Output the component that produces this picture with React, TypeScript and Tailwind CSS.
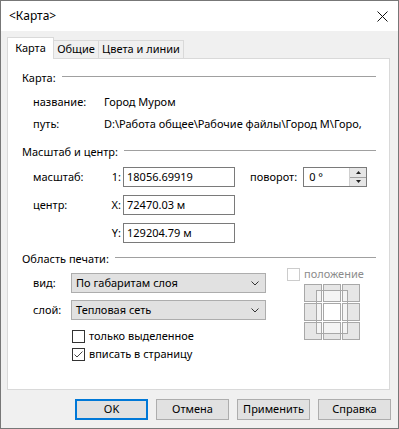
import React from 'react';

const font = { fontFamily: '"Noto Sans", "Liberation Sans", sans-serif' };

function SectionHeader({ title }: { title: string }) {
  return (
    <div className="flex items-center h-[16px]">
      <span className="whitespace-nowrap">{title}</span>
      <div className="flex-1 h-px bg-[#a0a0a0] ml-[6px] mb-[3px]" />
    </div>
  );
}

function TextBox({ value, width }: { value: string; width: string }) {
  return (
    <div className={`${width} h-[20px] border border-[#7a7a7a] bg-white flex items-center pl-[3px]`}>
      {value}
    </div>
  );
}

function Select({ value }: { value: string }) {
  return (
    <div className="w-[195px] h-[20px] border border-[#adadad] bg-[#e1e1e1] flex items-center pl-[4px] pr-[6px]">
      <span className="flex-1">{value}</span>
      <svg width="8" height="5" viewBox="0 0 8 5">
        <path d="M0.5 0.5 L4 4 L7.5 0.5" fill="none" stroke="#333" strokeWidth="1" />
      </svg>
    </div>
  );
}

function Checkbox({ label, checked, disabled }: { label: string; checked?: boolean; disabled?: boolean }) {
  return (
    <div className="flex items-center h-[14px]">
      <div
        className={`shrink-0 w-[13px] h-[13px] border bg-white flex items-center justify-center ${
          disabled ? 'border-[#cccccc]' : 'border-[#333333]'
        }`}
      >
        {checked && (
          <svg width="11" height="11" viewBox="0 0 11 11">
            <path d="M1.5 5.5 L4 8 L9.5 2.5" fill="none" stroke="#444" strokeWidth="1" />
          </svg>
        )}
      </div>
      <span className={`ml-[4px] whitespace-nowrap ${disabled ? 'text-[#8c8c8c]' : ''}`}>{label}</span>
    </div>
  );
}

function PositionGrid() {
  const cells = [0, 19, 38];
  return (
    <svg width="57" height="57" viewBox="0 0 57 57">
      {cells.map(y =>
        cells.map(x => (
          <rect key={`f-${x}-${y}`} x={x + 0.5} y={y + 0.5} width="17" height="17" fill="#e6e6e6" />
        ))
      )}
      <rect x="12.5" y="6.5" width="31" height="43" fill="#ffffff" fillOpacity="0.55" stroke="#a8a8a8" />
      {cells.map(y =>
        cells.map(x => (
          <rect
            key={`s-${x}-${y}`}
            x={x + 0.5}
            y={y + 0.5}
            width="17"
            height="17"
            fill={x === 19 && y === 19 ? '#ffffff' : 'none'}
            stroke="#a8a8a8"
          />
        ))
      )}
    </svg>
  );
}

function Button({ label, primary }: { label: string; primary?: boolean }) {
  return (
    <div
      className={`w-[73px] h-[21px] bg-[#e1e1e1] flex items-center justify-center ${
        primary ? 'border-2 border-[#0078d7]' : 'border border-[#adadad]'
      }`}
    >
      {label}
    </div>
  );
}

export default function App() {
  return (
    <div
      className="w-[399px] h-[429px] border border-[#777777] bg-[#f0f0f0] text-[11px] text-black flex flex-col"
      style={font}
    >
      {/* Title bar */}
      <div className="h-[30px] bg-white flex items-center pl-[8px] pr-[10px] shrink-0">
        <span className="flex-1 text-[12px]">&lt;Карта&gt;</span>
        <svg width="11" height="11" viewBox="0 0 11 11">
          <path d="M0.5 0.5 L10.5 10.5 M10.5 0.5 L0.5 10.5" stroke="#111" strokeWidth="1" />
        </svg>
      </div>

      {/* Tabs */}
      <div className="mt-[6px] ml-[6px] flex items-end h-[21px]">
        <div className="relative z-10 w-[47px] h-[22px] -mb-px bg-white border-x border-t border-[#d9d9d9] flex items-center justify-center">
          Карта
        </div>
        <div className="-ml-px w-[46px] h-[18px] bg-[#f0f0f0] border-x border-t border-[#d9d9d9] flex items-center justify-center">
          Общие
        </div>
        <div className="-ml-px w-[86px] h-[18px] bg-[#f0f0f0] border-x border-t border-[#d9d9d9] flex items-center justify-center">
          Цвета и линии
        </div>
      </div>

      {/* Panel */}
      <div className="ml-[6px] w-[383px] h-[332px] border border-[#d9d9d9] bg-white pl-[14px] pr-[13px] flex flex-col">
        <div className="mt-[11px]">
          <SectionHeader title="Карта:" />
        </div>
        <div className="mt-[8px] h-[16px] flex items-center pl-[11px]">
          <span className="shrink-0 w-[71px]">название:</span>
          <span>Город Муром</span>
        </div>
        <div className="mt-[6px] h-[16px] flex items-center pl-[11px]">
          <span className="shrink-0 w-[71px]">путь:</span>
          <span className="whitespace-nowrap">D:\Работа общее\Рабочие файлы\Город М\Горо,</span>
        </div>

        <div className="mt-[12px]">
          <SectionHeader title="Масштаб и центр:" />
        </div>
        <div className="mt-[7px] flex items-center pl-[11px]">
          <span className="shrink-0 w-[75px]">масштаб:</span>
          <span className="shrink-0 w-[13px] text-right">1:</span>
          <div className="ml-[2px]">
            <TextBox value="18056.69919" width="w-[112px]" />
          </div>
          <span className="ml-[15px]">поворот:</span>
          <div className="ml-[6px] w-[64px] h-[20px] border border-[#7a7a7a] bg-white flex items-center pl-[5px]">
            <span className="flex-1">0 °</span>
            <div className="w-[17px] h-[18px] flex flex-col border-l border-[#cfcfcf]">
              <div className="flex-1 bg-[#e6e6e6] border-b border-[#a0a0a0] flex items-center justify-center">
                <svg width="5" height="3" viewBox="0 0 5 3">
                  <path d="M0 3 L2.5 0 L5 3 Z" fill="#222" />
                </svg>
              </div>
              <div className="flex-1 bg-[#e6e6e6] flex items-center justify-center">
                <svg width="5" height="3" viewBox="0 0 5 3">
                  <path d="M0 0 L2.5 3 L5 0 Z" fill="#222" />
                </svg>
              </div>
            </div>
          </div>
        </div>
        <div className="mt-[8px] flex items-center pl-[11px]">
          <span className="shrink-0 w-[75px]">центр:</span>
          <span className="shrink-0 w-[13px] text-right">X:</span>
          <div className="ml-[2px]">
            <TextBox value="72470.03 м" width="w-[112px]" />
          </div>
        </div>
        <div className="mt-[8px] flex items-center pl-[11px]">
          <span className="shrink-0 w-[75px]" />
          <span className="shrink-0 w-[13px] text-right">Y:</span>
          <div className="ml-[2px]">
            <TextBox value="129204.79 м" width="w-[112px]" />
          </div>
        </div>

        <div className="mt-[8px]">
          <SectionHeader title="Область печати:" />
        </div>
        <div className="flex">
          <div className="flex flex-col pl-[11px]">
            <div className="mt-[6px] flex items-center">
              <span className="shrink-0 w-[38px]">вид:</span>
              <Select value="По габаритам слоя" />
            </div>
            <div className="mt-[7px] flex items-center">
              <span className="shrink-0 w-[38px]">слой:</span>
              <Select value="Тепловая сеть" />
            </div>
            <div className="mt-[9px] ml-[39px]">
              <Checkbox label="только выделенное" />
            </div>
            <div className="mt-[4px] ml-[39px]">
              <Checkbox label="вписать в страницу" checked />
            </div>
          </div>
          <div className="ml-[21px] flex flex-col">
            <Checkbox label="положение" disabled />
            <div className="mt-[3px] ml-[17px]">
              <PositionGrid />
            </div>
          </div>
        </div>
      </div>

      {/* Buttons */}
      <div className="mt-[9px] flex justify-end gap-[8px] pr-[7px]">
        <Button label="OK" primary />
        <Button label="Отмена" />
        <Button label="Применить" />
        <Button label="Справка" />
      </div>
    </div>
  );
}
